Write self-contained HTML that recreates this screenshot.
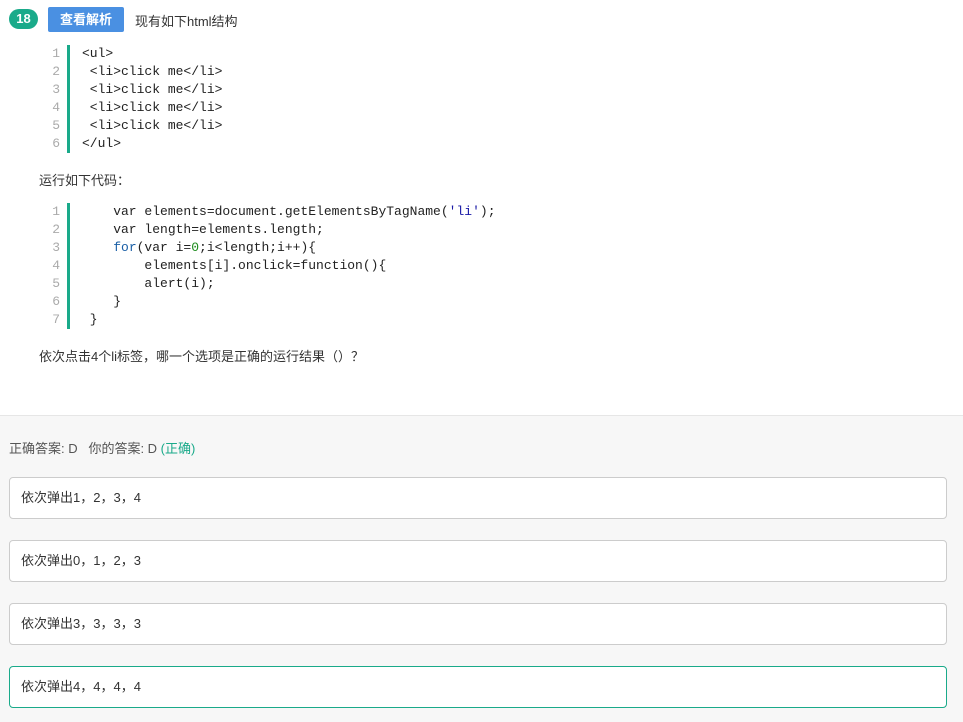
<!DOCTYPE html>
<html><head><meta charset="utf-8"><style>
body{margin:0;width:963px;height:721px;background:#fff;font-family:"Liberation Sans","Noto Sans CJK SC",sans-serif;color:#333;position:relative;overflow:hidden}
.abs{position:absolute}
.num{left:9px;top:9px;width:29px;height:20px;border-radius:10px;background:#1aaa8a;color:#fff;font-size:13px;font-weight:bold;text-align:center;line-height:20px}
.btn{left:48px;top:7px;width:76px;height:25px;background:#4a90e2;border-radius:2px;color:#fff;font-size:13px;font-weight:bold;text-align:center;line-height:25px}
.code{left:40px;font-family:"Liberation Mono","DejaVu Sans Mono",monospace;font-size:13px;line-height:18px;color:#222}
.ln{position:absolute;left:0;width:20px;text-align:right;color:#aaa}
.bar{position:absolute;left:27px;width:3px;background:#1aaa8a}
pre{margin:0;position:absolute;left:42px;font:inherit}
.t{font-size:13px;color:#333}
.grey{left:0;top:415px;width:963px;height:306px;background:#f7f7f7;border-top:1px solid #e6e6e6}
.opt{left:9px;width:938px;height:42px;background:#fff;border:1px solid #ccc;border-radius:4px;font-size:13px;line-height:40px;box-sizing:border-box;padding-left:11px;color:#333}
</style></head><body>
<div class="abs num">18</div>
<div class="abs btn">查看解析</div>
<div class="abs t" style="left:135px;top:11px">现有如下html结构</div>
<div class="abs code" style="top:45px;height:108px">
<div class="ln">1<br>2<br>3<br>4<br>5<br>6</div>
<div class="bar" style="top:0;height:108px"></div>
<pre>&lt;ul&gt;
 &lt;li&gt;click me&lt;/li&gt;
 &lt;li&gt;click me&lt;/li&gt;
 &lt;li&gt;click me&lt;/li&gt;
 &lt;li&gt;click me&lt;/li&gt;
&lt;/ul&gt;</pre>
</div>
<div class="abs t" style="left:39px;top:170px">运行如下代码：</div>
<div class="abs code" style="top:203px;height:126px">
<div class="ln">1<br>2<br>3<br>4<br>5<br>6<br>7</div>
<div class="bar" style="top:0;height:126px"></div>
<pre>    var elements=document.getElementsByTagName(<span style="color:#1a1aa6">'li'</span>);
    var length=elements.length;
    <span style="color:#1a5fa6">for</span>(var i=<span style="color:#1a8a1a">0</span>;i&lt;length;i++){
        elements[i].onclick=function(){
        alert(i);
    }
 }</pre>
</div>
<div class="abs t" style="left:39px;top:346px">依次点击4个li标签，哪一个选项是正确的运行结果（）？</div>
<div class="abs grey"></div>
<div class="abs t" style="left:9px;top:438px;color:#555">正确答案: D&nbsp;&nbsp;&nbsp;你的答案: D <span style="color:#1aaa8a">(正确)</span></div>
<div class="abs opt" style="top:477px">依次弹出1，2，3，4</div>
<div class="abs opt" style="top:540px">依次弹出0，1，2，3</div>
<div class="abs opt" style="top:603px">依次弹出3，3，3，3</div>
<div class="abs opt" style="top:666px;border-color:#1aaa8a">依次弹出4，4，4，4</div>
</body></html>
